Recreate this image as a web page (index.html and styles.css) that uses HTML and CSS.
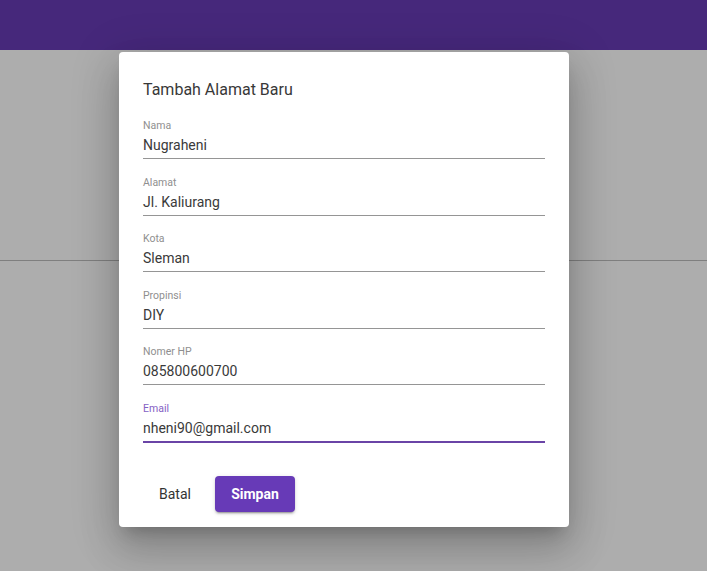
FILE: index.html
```html
<!DOCTYPE html>
<html lang="id">
<head>
<meta charset="utf-8">
<title>Tambah Alamat Baru</title>
<link rel="stylesheet" href="styles.css">
</head>
<body>
<header class="topbar"></header>
<main class="content"></main>
<div class="backdrop">
  <div class="dialog">
    <h2 class="dialog-title">Tambah Alamat Baru</h2>
    <form class="form">
      <div class="field">
        <div class="field-label">Nama</div>
        <div class="field-value">Nugraheni</div>
      </div>
      <div class="field">
        <div class="field-label">Alamat</div>
        <div class="field-value">Jl. Kaliurang</div>
      </div>
      <div class="field">
        <div class="field-label">Kota</div>
        <div class="field-value">Sleman</div>
      </div>
      <div class="field">
        <div class="field-label">Propinsi</div>
        <div class="field-value">DIY</div>
      </div>
      <div class="field">
        <div class="field-label">Nomer HP</div>
        <div class="field-value">085800600700</div>
      </div>
      <div class="field field-focused">
        <div class="field-label">Email</div>
        <div class="field-value">nheni90@gmail.com</div>
      </div>
    </form>
    <div class="actions">
      <button class="btn btn-text" type="button">Batal</button>
      <button class="btn btn-primary" type="button">Simpan</button>
    </div>
  </div>
</div>
</body>
</html>
```

FILE: styles.css
```css
* { box-sizing: border-box; }

html, body {
  margin: 0;
  padding: 0;
}

body {
  width: 707px;
  height: 571px;
  overflow: hidden;
  background: #adadad;
  font-family: Roboto, "Liberation Sans", Arial, sans-serif;
  position: relative;
}

.topbar {
  height: 50px;
  background: #46287b;
}

.content {
  height: 211px;
  border-bottom: 1px solid #7f7f7f;
}

.backdrop {
  position: absolute;
  inset: 0;
}

.dialog {
  position: absolute;
  left: 119px;
  top: 52px;
  width: 450px;
  height: 475px;
  background: #fff;
  border-radius: 4px;
  padding: 26px 24px 0;
  box-shadow: 0 11px 15px -7px rgba(0,0,0,.2),
              0 24px 38px 3px rgba(0,0,0,.14),
              0 9px 46px 8px rgba(0,0,0,.12);
  display: flex;
  flex-direction: column;
}

.dialog-title {
  margin: 0;
  font-size: 16px;
  line-height: 24px;
  font-weight: 400;
  color: #383838;
}

.form {
  margin-top: 17px;
  display: flex;
  flex-direction: column;
  gap: 16.6px;
}

.field {
  border-bottom: 1px solid #959595;
}

.field-label {
  font-size: 10.5px;
  line-height: 14px;
  color: #8f8f8f;
}

.field-value {
  margin-top: 2px;
  padding-bottom: 3px;
  font-size: 14px;
  line-height: 20px;
  color: #3a3a3a;
}

.field-focused {
  border-bottom-color: #6a44a6;
  box-shadow: 0 1px 0 #6a44a6;
}

.field-focused .field-label {
  color: #8461c4;
}

.actions {
  margin-top: 34px;
  display: flex;
  gap: 8px;
}

.btn {
  height: 36px;
  min-width: 64px;
  padding: 0 16px;
  border: none;
  border-radius: 4px;
  font-family: Roboto, "Liberation Sans", Arial, sans-serif;
  font-size: 14px;
  cursor: pointer;
}

.btn-text {
  background: transparent;
  color: #333;
  font-weight: 400;
}

.btn-primary {
  width: 80px;
  background: #673ab7;
  color: #fff;
  font-weight: 700;
  box-shadow: 0 3px 1px -2px rgba(0,0,0,.2),
              0 2px 2px 0 rgba(0,0,0,.14),
              0 1px 5px 0 rgba(0,0,0,.12);
}
```
